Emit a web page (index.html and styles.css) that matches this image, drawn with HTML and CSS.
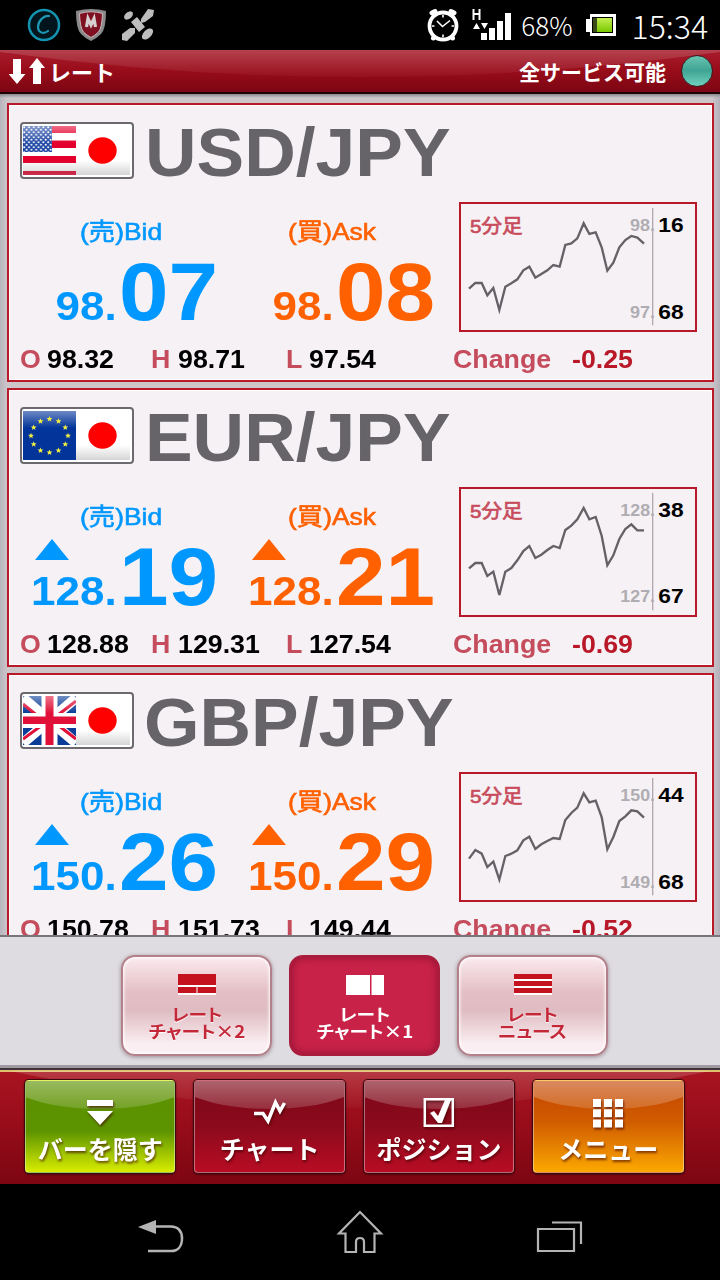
FILE: index.html
```html
<!DOCTYPE html>
<html lang="ja">
<head>
  <meta charset="UTF-8" />
  <meta name="viewport" content="width=device-width, initial-scale=1.0"/>
  <title>レート</title>
  <link rel="stylesheet" href="styles.css">
</head>
<body>

  <!-- 共通シンボル -->
  <svg class="defs" width="0" height="0">
    <defs>
      <linearGradient id="gloss" x1="0" y1="0" x2="0" y2="1">
        <stop offset="0" stop-color="#fff" stop-opacity=".42"/>
        <stop offset=".35" stop-color="#fff" stop-opacity="0"/>
      </linearGradient>
      <linearGradient id="fade" x1="0" y1="0" x2="0" y2="1">
        <stop offset="0" stop-color="#fff" stop-opacity=".16"/>
        <stop offset="1" stop-color="#fff" stop-opacity=".03"/>
      </linearGradient>
      <linearGradient id="shade" x1="0" y1="0" x2="0" y2="1">
        <stop offset=".7" stop-color="#888" stop-opacity="0"/>
        <stop offset="1" stop-color="#888" stop-opacity=".35"/>
      </linearGradient>
      <linearGradient id="battery" x1="0" y1="0" x2="0" y2="1">
        <stop offset="0" stop-color="#c4ee50"/>
        <stop offset="1" stop-color="#78c800"/>
      </linearGradient>
      <pattern id="stars" width="4.8" height="5" patternUnits="userSpaceOnUse">
        <circle cx="1.2" cy="1.3" r="1" fill="#fff"/>
        <circle cx="3.6" cy="3.8" r="1" fill="#fff"/>
      </pattern>
      <path id="star" d="M0-3 .8-1 2.900-1 1.300.4 1.800 2.500 0 1.300-1.800 2.500-1.300.4-2.900-1-.8-1z"/>
      <symbol id="japan" viewBox="0 0 54 49">
        <path fill="#fff" d="M0 0h54v49H0z"/>
        <path fill="url(#shade)" d="M0 0h54v49H0z"/>
        <ellipse cx="26.500" cy="24.500" rx="14.200" ry="13.200" fill="#f00"/>
      </symbol>
      <symbol id="usa" viewBox="0 0 53 49">
        <path fill="#fff" d="M0 0h53v49H0z"/>
        <path fill="#e4002c" d="M0 0h53v7H0zM0 14.500h53V22H0zM0 30h53v7H0zM0 45h53v4H0z"/>
        <path fill="#2048a4" d="M0 0h29v26H0z"/>
        <path fill="url(#gloss)" d="M0 0h53v49H0z"/>
        <path fill="url(#stars)" d="M0 0h29v26H0z"/>
        <path fill="url(#shade)" d="M0 0h53v49H0z"/>
      </symbol>
      <symbol id="eu" viewBox="0 0 53 49">
        <path fill="#02349a" d="M0 0h53v49H0z"/>
        <path fill="url(#gloss)" d="M0 0h53v49H0z"/>
        <g fill="#f4f040">
          <use href="#star" x="26.500" y="8"/><use href="#star" x="35.500" y="10.300"/>
          <use href="#star" x="42.300" y="16.500"/><use href="#star" x="45" y="24.800"/>
          <use href="#star" x="42.300" y="33.300"/><use href="#star" x="35.500" y="39.500"/>
          <use href="#star" x="26.500" y="41.500"/><use href="#star" x="17.500" y="39.500"/>
          <use href="#star" x="10.700" y="33.300"/><use href="#star" x="8" y="24.800"/>
          <use href="#star" x="10.700" y="16.500"/><use href="#star" x="17.500" y="10.300"/>
        </g>
      </symbol>
      <symbol id="uk" viewBox="0 0 53 49">
        <path fill="#0a3c98" d="M0 0h53v49H0z"/>
        <path stroke="#fff" stroke-width="10" d="M0 2 53 47M53 2 0 47"/>
        <path stroke="#e01038" stroke-width="3" d="M0 8 22 26M53 5 31 22M0 43 22 27M53 43 31 26"/>
        <path fill="#fff" d="M0 17h53v15H0zM18.500 0h16v49h-16z"/>
        <path fill="#e01038" d="M0 20.500h53v7.500H0zM22.500 0h8v49h-8z"/>
        <path fill="url(#gloss)" d="M0 0h53v49H0z"/>
      </symbol>
    </defs>
  </svg>

  <!-- ステータスバー -->
  <div class="status">
    <div class="status-left">
      <svg width="34" height="34" viewBox="0 0 34 34" fill="none">
        <circle cx="17" cy="17" r="15" fill="#02151c" stroke="#1393b0" stroke-width="2.500"/>
        <path stroke="#1d97b4" stroke-width="2.200" stroke-linecap="round" d="M22 8c-5-1-11 5-11 11 0 5 5 8 10 4"/>
      </svg>
      <svg width="30" height="34" viewBox="0 0 30 34">
        <path fill="#8a8a8a" d="M0 3Q15-1 30 3 30 21 25 26 20 31 15 33 10 31 5 26 0 21 0 3z"/>
        <path fill="#7e1021" stroke="#c8b8b8" d="M3.500 5.500Q15 2 26.500 5.500 26 20 22.500 24 19 27.500 15 29.500 11 27.500 7.500 24 4 20 3.500 5.500z"/>
        <path fill="none" stroke="#d8d0d0" stroke-width="3.200" d="M10.500 19 12 10.500 15 17 18 10.500 19.500 19"/>
      </svg>
      <svg width="34" height="34" viewBox="0 0 34 34" fill="#bdbdbd">
        <path d="M10 14 16 9 24 19 18 24zM20 11 27 1 33 2 32 8 24 14 20 15zM1 26 9 20 14 20 14 25 6 33 1 32z"/>
        <ellipse cx="7.500" cy="7.500" rx="5" ry="3.400" transform="rotate(-40 7.500 7.500)"/>
        <ellipse cx="26.500" cy="26" rx="6.800" ry="4" transform="rotate(-45 26.500 26)"/>
      </svg>
    </div>
    <div class="status-right">
      <svg width="32" height="34" viewBox="0 0 32 34" fill="none" stroke="#fff">
        <path stroke-width="5" stroke-linecap="round" d="M5 5 8 3.500M27 5 24 3.500M6.500 30 7 29M25.500 30 25 29"/>
        <circle cx="16" cy="18" r="13.500" fill="#000" stroke-width="3.800"/>
        <path stroke-width="1.600" d="M10 13 15.500 18.500 23 12.500M16 7v2.500M16 26.500V29M5 18h2.500M24.500 18H27"/>
      </svg>
      <svg width="40" height="34" viewBox="0 0 40 34" fill="#fff">
        <path d="M.5 1h2v4h4V1h2v11h-2V7h-4v5h-2zM1 21 4.500 15 8 21zM9 15h7l-3.500 6zM9 25h6v7H9zM17 20h6v12h-6zM25 13h6v19h-6zM33 5h6v27h-6z"/>
      </svg>
      <span class="percent">68%</span>
      <svg width="32" height="22" viewBox="0 0 32 22">
        <path fill="#fff" d="M5 0h26v22H5v-4H1V5h4z"/>
        <path fill="#000" d="M7 3h21v16H7z"/>
        <path fill="#3a4a18" d="M8 4h5v14H8z"/>
        <path fill="url(#battery)" d="M12 4h15v14H12z"/>
      </svg>
      <span class="clock">15:34</span>
    </div>
  </div>

  <!-- ヘッダー -->
  <div class="header">
    <svg class="arc" viewBox="0 0 720 42" preserveAspectRatio="none">
      <path fill="url(#fade)" d="M0 2Q180 27 360 27 540 27 720 2V0H0z"/>
    </svg>
    <div class="title">
      <svg width="36" height="28" viewBox="0 0 36 28" fill="#fff">
        <path d="M4 2h8v15h4.500L8 27-.5 17H4zM24 27h8V11h4L28 1l-8 10h4z"/>
      </svg>
      <span>レート</span>
    </div>
    <div class="service">
      <span>全サービス可能</span>
      <i class="lamp"></i>
    </div>
  </div>

  <!-- レート一覧 -->
  <div class="rates">
    <div class="card">
      <div class="pair">
        <div class="flags">
          <svg width="53" height="49"><use href="#usa"/></svg>
          <svg width="54" height="49"><use href="#japan"/></svg>
        </div>
        <span class="name">USD/JPY</span>
      </div>
      <div class="quotes">
        <div class="quote bid">
          <div class="label">(売)Bid</div>
          <div class="price"><span class="small">98.</span><span class="big">07</span></div>
        </div>
        <div class="quote ask">
          <div class="label">(買)Ask</div>
          <div class="price"><span class="small">98.</span><span class="big">08</span></div>
        </div>
        <div class="chart">
          <svg viewBox="57 36 714 390">
            <path class="axis" d="M638 54V406"/>
            <polyline class="line" points="87,296 106,279 125,279 142,316 160,294 178,360 196,290 214,280 232,268 250,241 268,230 286,263 304,252 322,241 340,225 359,230 376,165 394,160 412,145 431,100 448,132 467,127 485,172 502,242 520,218 538,172 556,150 574,138 592,143 612,161"/>
            <text class="span" x="90" y="128" textLength="158" lengthAdjust="spacingAndGlyphs">5分足</text>
            <text class="int" x="645" y="124" textLength="75" lengthAdjust="spacingAndGlyphs">98.</text>
            <text class="dec" x="731" y="127" textLength="76" lengthAdjust="spacingAndGlyphs">16</text>
            <text class="int" x="645" y="383" textLength="75" lengthAdjust="spacingAndGlyphs">97.</text>
            <text class="dec" x="731" y="386" textLength="76" lengthAdjust="spacingAndGlyphs">68</text>
          </svg>
        </div>
      </div>
      <div class="ohlc">
        <b>O</b><span>98.32</span><b>H</b><span>98.71</span><b>L</b><span>97.54</span><b>Change</b><span class="minus">-0.25</span>
      </div>
    </div>

    <div class="card">
      <div class="pair">
        <div class="flags">
          <svg width="53" height="49"><use href="#eu"/></svg>
          <svg width="54" height="49"><use href="#japan"/></svg>
        </div>
        <span class="name">EUR/JPY</span>
      </div>
      <div class="quotes">
        <div class="quote bid up">
          <div class="label">(売)Bid</div>
          <div class="price"><span class="small">128.</span><span class="big">19</span></div>
        </div>
        <div class="quote ask up">
          <div class="label">(買)Ask</div>
          <div class="price"><span class="small">128.</span><span class="big">21</span></div>
        </div>
        <div class="chart">
          <svg viewBox="57 36 714 390">
            <path class="axis" d="M638 54V406"/>
            <polyline class="line" points="87,280 106,264 125,264 142,303 160,290 178,360 196,290 214,279 232,256 250,228 268,213 286,249 304,239 322,225 340,213 359,219 376,165 394,152 412,133 431,99 448,133 467,126 485,182 502,271 520,241 538,192 556,162 574,148 592,166 612,166"/>
            <text class="span" x="90" y="128" textLength="158" lengthAdjust="spacingAndGlyphs">5分足</text>
            <text class="int" x="645" y="124" textLength="104" lengthAdjust="spacingAndGlyphs">128.</text>
            <text class="dec" x="731" y="127" textLength="76" lengthAdjust="spacingAndGlyphs">38</text>
            <text class="int" x="645" y="382" textLength="104" lengthAdjust="spacingAndGlyphs">127.</text>
            <text class="dec" x="731" y="385" textLength="76" lengthAdjust="spacingAndGlyphs">67</text>
          </svg>
        </div>
      </div>
      <div class="ohlc">
        <b>O</b><span>128.88</span><b>H</b><span>129.31</span><b>L</b><span>127.54</span><b>Change</b><span class="minus">-0.69</span>
      </div>
    </div>

    <div class="card">
      <div class="pair">
        <div class="flags">
          <svg width="53" height="49"><use href="#uk"/></svg>
          <svg width="54" height="49"><use href="#japan"/></svg>
        </div>
        <span class="name gbp">GBP/JPY</span>
      </div>
      <div class="quotes">
        <div class="quote bid up">
          <div class="label">(売)Bid</div>
          <div class="price"><span class="small">150.</span><span class="big">26</span></div>
        </div>
        <div class="quote ask up">
          <div class="label">(買)Ask</div>
          <div class="price"><span class="small">150.</span><span class="big">29</span></div>
        </div>
        <div class="chart">
          <svg viewBox="57 36 714 390">
            <path class="axis" d="M638 54V406"/>
            <polyline class="line" points="87,296 106,270 125,281 142,321 160,305 178,359 196,288 214,281 232,271 250,241 268,230 286,267 304,253 322,243 340,234 359,237 376,180 394,159 412,143 431,100 448,127 467,122 485,171 502,268 520,231 538,183 556,169 574,151 592,154 612,173"/>
            <text class="span" x="90" y="128" textLength="158" lengthAdjust="spacingAndGlyphs">5分足</text>
            <text class="int" x="645" y="124" textLength="104" lengthAdjust="spacingAndGlyphs">150.</text>
            <text class="dec" x="731" y="127" textLength="76" lengthAdjust="spacingAndGlyphs">44</text>
            <text class="int" x="645" y="383" textLength="104" lengthAdjust="spacingAndGlyphs">149.</text>
            <text class="dec" x="731" y="386" textLength="76" lengthAdjust="spacingAndGlyphs">68</text>
          </svg>
        </div>
      </div>
      <div class="ohlc">
        <b>O</b><span>150.78</span><b>H</b><span>151.73</span><b>L</b><span>149.44</span><b>Change</b><span class="minus">-0.52</span>
      </div>
    </div>
  </div>

  <!-- 表示切替 -->
  <div class="modes">
    <button class="mode">
      <svg width="38" height="22" viewBox="0 0 38 22"><path fill="#fff" d="M0 1h38v21H0z"/><path fill="#c4121f" d="M0 1h38v11H0zM0 14h18.500v6H0zM19.500 14H38v6H19.500z"/></svg>
      <span>レート<br>チャート×2</span>
    </button>
    <button class="mode active">
      <svg width="38" height="22" viewBox="0 0 38 22"><path fill="#fff" d="M0 2h24v20H0zM25.500 2H38v20H25.500z"/></svg>
      <span>レート<br>チャート×1</span>
    </button>
    <button class="mode">
      <svg width="38" height="22" viewBox="0 0 38 22"><path fill="#fff" d="M0 1h38v21H0z"/><path fill="#c4121f" d="M0 1h38v5H0zM0 8h38v5H0zM0 15h38v5H0z"/></svg>
      <span>レート<br>ニュース</span>
    </button>
  </div>

  <!-- タブバー -->
  <div class="tabs">
    <svg class="arc" viewBox="0 0 720 117" preserveAspectRatio="none">
      <path fill="url(#fade)" d="M10 6Q180 42 360 42 540 42 710 6z"/>
    </svg>
    <button class="tab green">
      <svg width="28" height="30" viewBox="0 0 28 30" fill="#fff"><path d="M1 2h26v6H1zM1 13h26L14 27z"/></svg>
      <span>バーを隠す</span>
    </button>
    <button class="tab red">
      <svg width="34" height="30" viewBox="0 0 34 30" fill="none" stroke="#fff" stroke-width="3.500"><path d="M1 15.500H10L15 23 22.500 4.500 27 13 31.500 5"/></svg>
      <span>チャート</span>
    </button>
    <button class="tab red">
      <svg width="32" height="30" viewBox="0 0 32 30" fill="none" stroke="#fff"><path stroke-width="2.500" d="M1.800 1.300h28v26.500h-28z"/><path fill="#fff" stroke="none" d="M7 15 11 13 15 18 22 2 28 2 19 25 15 25z"/></svg>
      <span>ポジション</span>
    </button>
    <button class="tab orange">
      <svg width="32" height="30" viewBox="0 0 32 30" fill="#fff"><path d="M1 1h8v8H1zM12 1h8v8h-8zM23 1h8v8h-8zM1 11.200h8v8H1zM12 11.200h8v8h-8zM23 11.200h8v8h-8zM1 21.500h8v8H1zM12 21.500h8v8h-8zM23 21.500h8v8h-8z"/></svg>
      <span>メニュー</span>
    </button>
  </div>

  <!-- ナビゲーション -->
  <div class="nav">
    <svg width="48" height="46" viewBox="0 0 48 46"><path fill="#b4b4b4" d="M1 18 19 11v14z"/><path fill="none" stroke="#b4b4b4" stroke-width="2.500" d="M18 17.500H34C41 17.500 45 22 45 29.500S41 42 34 42H11"/></svg>
    <svg width="48" height="46" viewBox="0 0 48 46" fill="none" stroke="#b4b4b4" stroke-width="2.200"><path d="M24 3 3 24.500H9.500V43H20V33Q20 29 24 29T28 33V43H38.500V24.500H45z"/></svg>
    <svg width="48" height="46" viewBox="0 0 48 46" fill="none" stroke="#b4b4b4" stroke-width="2.200"><path d="M3 20H39V42H3zM17 13.500H46V35"/></svg>
  </div>

</body>
</html>
```

FILE: styles.css
```css
body {
  margin: 0;
  width: 720px;
  height: 1280px;
  overflow: hidden;
  display: flex;
  flex-direction: column;
  background-color: #000;
  font-family: "Liberation Sans", "Noto Sans CJK JP", sans-serif;
}

svg {
  display: block;
  flex: none;
}

.defs {
  position: absolute;
}

button {
  border: none;
  padding: 0;
  font-family: inherit;
}

/* status bar */
.status {
  height: 50px;
  flex: none;
  display: flex;
  justify-content: space-between;
  align-items: center;
  padding: 0 12px 0 27px;
  color: #fff;
  font-family: "Noto Sans CJK JP", sans-serif;
  font-weight: 300;
}

.status-left,
.status-right {
  display: flex;
  align-items: center;
}

.status-left {
  gap: 15px;
}

.status-right svg:nth-child(2) {
  margin: 0 9px 0 13px;
}

.percent {
  font-size: 26px;
  line-height: 48px;
  margin-right: 12px;
}

.clock {
  font-size: 32px;
  line-height: 48px;
  margin-left: 15px;
}

/* header */
.header {
  position: relative;
  height: 42px;
  flex: none;
  display: flex;
  justify-content: space-between;
  align-items: center;
  padding: 0 7px 0 9px;
  color: #fff;
  font-family: "Noto Sans CJK JP", sans-serif;
  font-weight: bold;
  background: linear-gradient(#a81c2c, #980c1a 50%, #7c0612);
  border-bottom: 2px solid #1c0406;
}

.arc {
  position: absolute;
  left: 0;
  top: 0;
  width: 100%;
  height: 100%;
}

.title,
.service {
  position: relative;
  display: flex;
  align-items: center;
}

.title {
  gap: 4px;
  font-size: 22px;
}

.service {
  gap: 15px;
  font-size: 21px;
}

.title span,
.service span {
  line-height: 42px;
}

.lamp {
  width: 30px;
  height: 30px;
  border-radius: 50%;
  border: 1px solid #3c1c20;
  background: linear-gradient(#68c4b0, #40a494 48%, #70d0bc);
}

/* rate cards */
.rates {
  height: 841px;
  box-sizing: border-box;
  flex: none;
  overflow: hidden;
  display: flex;
  flex-direction: column;
  gap: 6px;
  padding: 9px 6px 0 7px;
  background: linear-gradient(#8c888c, transparent 4px), linear-gradient(90deg, #b8b4bc, #ccc6cb 7px, #ccc6cb 712px, #b4b0ba);
}

.card {
  height: 279px;
  box-sizing: border-box;
  flex: none;
  border: 2px solid #b81828;
  box-shadow: inset 0 0 0 1px #fff;
  background-color: #f5f1f5;
  padding: 17px 10px 0 11px;
}

.pair {
  display: flex;
  height: 58px;
}

.flags {
  display: flex;
  box-sizing: border-box;
  width: 114px;
  height: 57px;
  padding: 2px 1px;
  border: 2px solid #6c6a6e;
  border-radius: 4px;
  background-color: #fff;
}

.name {
  margin-left: 11px;
  color: #666468;
  font-size: 68px;
  font-weight: bold;
  line-height: 60px;
  transform: scaleX(1.05);
  transform-origin: left;
}

.name.gbp {
  margin-left: 10px;
}

.quotes {
  display: flex;
  height: 164px;
}

.quote {
  position: relative;
  width: 198px;
  padding-top: 37px;
}

.bid {
  color: #0098ff;
}

.ask {
  color: #ff6000;
  margin-left: 19px;
}

.label {
  height: 30px;
  margin-left: 60px;
  font-size: 24px;
  line-height: 30px;
  white-space: nowrap;
  font-kerning: none;
  -webkit-text-stroke: 0.6px;
  transform: scaleX(1.1);
  transform-origin: left;
}

.ask .label {
  margin-left: 51px;
}

.price {
  display: flex;
  justify-content: flex-end;
  align-items: baseline;
  gap: 2px;
  font-weight: bold;
  line-height: 90px;
  transform: scaleX(1.1);
  transform-origin: right;
}

.small {
  font-size: 40px;
}

.big {
  font-size: 81px;
}

/* price arrow */
.up::before {
  content: "";
  position: absolute;
  left: 15px;
  top: 74px;
  width: 34px;
  height: 21px;
  background-color: currentColor;
  clip-path: polygon(50% 0, 100% 100%, 0 100%);
}

.chart {
  width: 238px;
  height: 130px;
  box-sizing: border-box;
  margin: 22px 0 0 24px;
  border: 2px solid #b81828;
}

.chart svg {
  width: 238px;
  height: 130px;
  margin: -2px;
}

.axis {
  stroke: #b4a8b0;
  stroke-width: 4;
}

.line {
  fill: none;
  stroke: #646266;
  stroke-width: 7;
}

.span {
  fill: #c84c5c;
  stroke: #c84c5c;
  stroke-width: 2;
  font-size: 57px;
}

.int,
.dec {
  font-weight: bold;
  text-anchor: end;
}

.int {
  fill: #b0adb2;
  font-size: 48px;
}

.dec {
  fill: #000;
  font-size: 59px;
}

.ohlc {
  display: grid;
  grid-template-columns: 27px 104px 27px 108px 23px 144px 119px auto;
  font-size: 25px;
  font-weight: bold;
  line-height: 30px;
}

.ohlc b,
.ohlc span {
  transform: scaleX(1.07);
  transform-origin: left;
}

.ohlc b {
  color: #c44c5c;
}

.ohlc .minus {
  color: #b81828;
}

/* mode buttons */
.modes {
  height: 130px;
  box-sizing: border-box;
  flex: none;
  display: flex;
  justify-content: center;
  gap: 17px;
  padding: 18px 0 0 9px;
  border-top: 2px solid #78747a;
  background-color: #dfdce1;
}

.mode {
  width: 151px;
  height: 101px;
  box-sizing: border-box;
  display: flex;
  flex-direction: column;
  align-items: center;
  padding-top: 16px;
  border: 2px solid #b4808c;
  border-radius: 14px;
  color: #c42838;
  background: linear-gradient(#fbeaee, #e4c0c6 35%, #dfbcc2 55%, #fbeef2 90%);
  box-shadow: inset 0 0 3px 1px #fff, 0 1px 4px #968a90;
}

.mode span {
  font-family: "Noto Sans CJK JP", sans-serif;
  font-size: 17px;
  font-weight: bold;
  line-height: 17px;
  margin-top: 10px;
  text-shadow: 0 1px 1px #fff;
  font-feature-settings: "palt";
  transform: scaleX(1.1);
}

.mode.active {
  color: #fff;
  border-color: #a81c3c;
  background: #c82248;
  box-shadow: inset 0 0 8px #8c1030;
}

.mode.active span {
  text-shadow: none;
}

/* tab bar */
.tabs {
  position: relative;
  height: 119px;
  box-sizing: border-box;
  flex: none;
  display: flex;
  gap: 19px;
  padding: 15px 0 0 25px;
  background: linear-gradient(#a09aa2 3px, #403438 3px 5px, #e0c070 5px 7px, #a81420 7px, #980c1a 50%, #7c0612);
}

.tab {
  position: relative;
  width: 150.400px;
  height: 93px;
  box-sizing: border-box;
  flex: none;
  display: flex;
  flex-direction: column;
  align-items: center;
  padding-top: 17px;
  color: #fff;
  border: 1px solid rgba(255, 255, 255, 0.4);
  border-radius: 4px;
  box-shadow: 0 0 0 1px #3c0810, 0 1px 2px 1px #50060e;
  overflow: hidden;
}

.tab::before {
  content: "";
  position: absolute;
  left: -20%;
  top: -50px;
  width: 140%;
  height: 78px;
  border-radius: 50%;
  background: linear-gradient(rgba(255, 255, 255, 0.4) 60%, rgba(255, 255, 255, 0.15));
}

.tab svg,
.tab span {
  position: relative;
  filter: drop-shadow(1px 2px 1px rgba(60, 0, 0, 0.6));
}

.tab span {
  font-family: "Noto Sans CJK JP", sans-serif;
  font-size: 25px;
  font-weight: bold;
  line-height: 30px;
  margin-top: 5px;
}

.green {
  background: linear-gradient(#5c9000, #5c9400 55%, #d8ec00);
}

.red {
  background: linear-gradient(#7c0818, #8c0a1c 50%, #b80c24);
}

.orange {
  background: linear-gradient(#c44400, #d05c00 45%, #fca800);
}

/* navigation */
.nav {
  flex: 1;
  display: flex;
  justify-content: center;
  align-items: center;
  gap: 151px;
}
```
